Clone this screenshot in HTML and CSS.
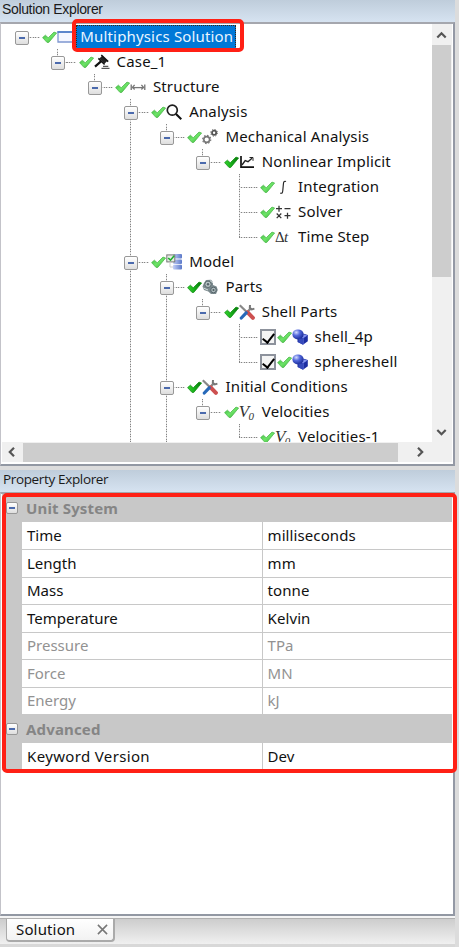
FILE: index.html
```html
<!DOCTYPE html>
<html lang="en">
<head>
<meta charset="utf-8">
<title>Solution Explorer</title>
<link rel="stylesheet" href="styles.css">
</head>
<body>
<svg class="defs" width="0" height="0" aria-hidden="true">
  <defs>
    <linearGradient id="lg" x1="0" y1="0" x2="1" y2="1"><stop offset="0" stop-color="#35b53a"/><stop offset=".5" stop-color="#6ee468"/><stop offset="1" stop-color="#35b335"/></linearGradient>
    <linearGradient id="dg" x1="0" y1="0" x2="1" y2="0"><stop offset="0" stop-color="#35d32f"/><stop offset=".5" stop-color="#16ad18"/><stop offset="1" stop-color="#08720c"/></linearGradient>
    <linearGradient id="bg" x1="0" y1="0" x2="1" y2="0"><stop offset="0" stop-color="#c3cff8"/><stop offset="1" stop-color="#5a78c8"/></linearGradient>
    <radialGradient id="ball" cx=".35" cy=".3" r=".8"><stop offset="0" stop-color="#d5dcff"/><stop offset=".4" stop-color="#5369dc"/><stop offset="1" stop-color="#10208c"/></radialGradient>
  </defs>
  <symbol id="ok" viewBox="0 0 15 14"><path d="M.6 7.6 3.4 5.2 6.2 7.8 12 2.1 14.6 3 6.8 12.4 5 12.4Z" fill="url(#lg)" stroke="#50b94f" stroke-width=".8"/></symbol>
  <symbol id="okd" viewBox="0 0 15 14"><path d="M.6 7.6 3.4 5.2 6.2 7.8 12 2.1 14.6 3 6.8 12.4 5 12.4Z" fill="url(#dg)" stroke="#169019" stroke-width=".8"/></symbol>
  <symbol id="win" viewBox="0 0 16 16"><path d="M1 3H17V13H1Z" fill="#f5f6ff" stroke="#7d96d0" stroke-width="1.3"/><path d="M.4 3H17" stroke="#4d7ac7" stroke-width="1.6"/></symbol>
  <symbol id="gavel" viewBox="0 0 16 16"><path d="M1 12.6 7 7.4" stroke="#111" stroke-width="2.2"/><path d="M5.4 4.5 8.2 1.8 13.2 7 10.5 9.7Z" fill="#222"/><path d="M7.3 1 14.2 7.6M4.4 4.4 10.6 10.5" stroke="#111" stroke-width="1.5"/><path d="M9 12.3H14.3M7.5 14.3H15.5" stroke="#555" stroke-width="1.3"/></symbol>
  <symbol id="beam" viewBox="0 0 16 16"><path d="M1.2 5.4V11M14.8 5.4V11" stroke="#666" stroke-width="1.2"/><path d="M2 8.6H14" fill="none" stroke="#777" stroke-width="1.3"/><path d="M4.6 5.8 2.6 8.3 4.6 10.5M11.4 5.8 13.4 8.3 11.4 10.5" fill="none" stroke="#777" stroke-width="1.3"/></symbol>
  <symbol id="mag" viewBox="0 0 16 16"><circle cx="6.3" cy="6.2" r="5" fill="none" stroke="#1e1e1e" stroke-width="1.7"/><path d="M10 10 15.3 15.2" stroke="#111" stroke-width="2.1"/></symbol>
  <symbol id="gears" viewBox="0 0 16 16"><g fill="none" stroke="#777"><circle cx="4.7" cy="10.5" r="2.9" stroke-width="1.6"/><circle cx="4.7" cy="10.5" r="4.1" stroke-width="1.1" stroke-dasharray="1.6 1.6"/><circle cx="12.1" cy="3.8" r="2.1" stroke="#555" stroke-width="1.8"/><circle cx="12.1" cy="3.8" r="3.4" stroke="#666" stroke-width="1" stroke-dasharray="1.3 1.37"/></g></symbol>
  <symbol id="chart" viewBox="0 0 16 16"><path d="M2 2V13.2H15" fill="none" stroke="#111" stroke-width="1.7"/><path d="M3 11 6.2 6.7 9 7.7 13 4.2" fill="none" stroke="#222" stroke-width="1.4"/><path d="M10.5 3.5H14V6.8" fill="none" stroke="#222" stroke-width="1"/></symbol>
  <symbol id="integral" viewBox="0 0 16 16"><path d="M11 2.6C9.2 1.6 8.6 3 8.4 5L7.8 11.5C7.6 14 6.9 14.8 5.2 14" fill="none" stroke="#222" stroke-width="1.15"/></symbol>
  <symbol id="ops" viewBox="0 0 16 16"><path d="M1 4.7H7M4 1.7V7.7M9.5 4.7H15.5M1.7 9.5 6.3 14.1M6.3 9.5 1.7 14.1M9.5 11.7H15.5M12.5 8.7V14.7" stroke="#333" stroke-width="1.25"/></symbol>
  <symbol id="model" viewBox="0 0 16 16"><g fill="url(#bg)"><rect x="7" y="0" width="9" height="4.6" rx="1"/><rect x="7" y="5.4" width="9" height="4.6" rx="1"/><rect x="7" y="10.8" width="9" height="4.8" rx="1"/></g><rect x=".8" y=".9" width="8" height="7" fill="#e6ede4" stroke="#777"/><path d="M2.2 4 4.5 6.2 8.2 1.8" fill="none" stroke="#20ad30" stroke-width="1.6"/><path d="M4 8V13H7" fill="none" stroke="#ccc"/></symbol>
  <symbol id="parts" viewBox="0 0 16 16"><path d="M2 4 4 1 9 .8 11 3.2V6L14.6 7.6 15.8 11 14 15H9L6.3 12.5 2 11 .5 7.5Z" fill="#7b8a8e"/><circle cx="6" cy="5.3" r="3.2" fill="#b7c3c4" stroke="#5b696d"/><circle cx="6" cy="5.3" r="1.2" fill="#56636a"/><circle cx="11.5" cy="11" r="2.8" fill="#aab8bb" stroke="#56646a"/><circle cx="11.5" cy="11" r="1" fill="#4f5c60"/><path d="M1.5 9 6 11M8 1.5 11 4" stroke="#d3dcdc"/></symbol>
  <symbol id="tools" viewBox="0 0 16 16"><path d="M7 9.5 12 4" stroke="#888" stroke-width="2.4"/><path d="M11 1 10.8 3.8 12.7 5.4 15.4 4.6" fill="none" stroke="#777" stroke-width="2"/><path d="M.8 1.2 8 8.3" stroke="#888" stroke-width="2.2"/><path d="M8.6 8.3 13.9 13.8" stroke="#cd5050" stroke-width="4" stroke-linecap="round"/><path d="M7.2 8.8 2.3 14" stroke="#2769b9" stroke-width="3.2" stroke-linecap="round"/></symbol>
  <symbol id="solid" viewBox="0 0 16 16"><path d="M5.5 7 11 4.5 15.8 6V12.2L11 15.8 5.5 13Z" fill="#1b2da2"/><path d="M6 7.4 11 9.2 15.5 6.6 10.6 5Z" fill="#8392ef"/><path d="M11 9.2V15.4" stroke="#6b7be0"/><ellipse cx="6" cy="5.4" rx="5.6" ry="5" fill="url(#ball)"/><path d="M6.6 9.8 11 9.2V15.4L6.4 13.3Z" fill="#3549bb"/></symbol>
  <symbol id="cross" viewBox="0 0 12 12"><path d="M1 1 11 11M11 1 1 11" stroke="#777" stroke-width="1.7"/></symbol>
</svg>

<main class="app">
  <section class="panel">
    <h2 class="title">Solution Explorer</h2>
    <div class="frame">
      <div class="view">
        <div class="tree">
          <div class="row"><i class="cell node"></i><svg class="ok"><use href="#ok"/></svg><svg class="ico"><use href="#win"/></svg><span class="label selected">Multiphysics Solution</span></div>
          <div class="row"><i class="cell"></i><i class="cell node up"></i><svg class="ok"><use href="#ok"/></svg><svg class="ico"><use href="#gavel"/></svg><span class="label">Case_1</span></div>
          <div class="row"><i class="cell"></i><i class="cell"></i><i class="cell node up"></i><svg class="ok"><use href="#ok"/></svg><svg class="ico"><use href="#beam"/></svg><span class="label">Structure</span></div>
          <div class="row"><i class="cell"></i><i class="cell"></i><i class="cell"></i><i class="cell node line"></i><svg class="ok"><use href="#ok"/></svg><svg class="ico"><use href="#mag"/></svg><span class="label">Analysis</span></div>
          <div class="row"><i class="cell"></i><i class="cell"></i><i class="cell"></i><i class="cell line"></i><i class="cell node up"></i><svg class="ok"><use href="#ok"/></svg><svg class="ico"><use href="#gears"/></svg><span class="label">Mechanical Analysis</span></div>
          <div class="row"><i class="cell"></i><i class="cell"></i><i class="cell"></i><i class="cell line"></i><i class="cell"></i><i class="cell node up"></i><svg class="ok"><use href="#okd"/></svg><svg class="ico"><use href="#chart"/></svg><span class="label">Nonlinear Implicit</span></div>
          <div class="row"><i class="cell"></i><i class="cell"></i><i class="cell"></i><i class="cell line"></i><i class="cell"></i><i class="cell"></i><i class="cell leaf line"></i><svg class="ok"><use href="#ok"/></svg><svg class="ico"><use href="#integral"/></svg><span class="label">Integration</span></div>
          <div class="row"><i class="cell"></i><i class="cell"></i><i class="cell"></i><i class="cell line"></i><i class="cell"></i><i class="cell"></i><i class="cell leaf line"></i><svg class="ok"><use href="#ok"/></svg><svg class="ico"><use href="#ops"/></svg><span class="label">Solver</span></div>
          <div class="row"><i class="cell"></i><i class="cell"></i><i class="cell"></i><i class="cell line"></i><i class="cell"></i><i class="cell"></i><i class="cell leaf up"></i><svg class="ok"><use href="#ok"/></svg><span class="ico math delta">Δ<em>t</em></span><span class="label">Time Step</span></div>
          <div class="row"><i class="cell"></i><i class="cell"></i><i class="cell"></i><i class="cell node line"></i><svg class="ok"><use href="#ok"/></svg><svg class="ico"><use href="#model"/></svg><span class="label">Model</span></div>
          <div class="row"><i class="cell"></i><i class="cell"></i><i class="cell"></i><i class="cell line"></i><i class="cell node line"></i><svg class="ok"><use href="#okd"/></svg><svg class="ico"><use href="#parts"/></svg><span class="label">Parts</span></div>
          <div class="row"><i class="cell"></i><i class="cell"></i><i class="cell"></i><i class="cell line"></i><i class="cell line"></i><i class="cell node up"></i><svg class="ok"><use href="#okd"/></svg><svg class="ico"><use href="#tools"/></svg><span class="label">Shell Parts</span></div>
          <div class="row"><i class="cell"></i><i class="cell"></i><i class="cell"></i><i class="cell line"></i><i class="cell line"></i><i class="cell"></i><i class="cell leaf line"></i><span class="check"></span><svg class="ok"><use href="#ok"/></svg><svg class="ico"><use href="#solid"/></svg><span class="label">shell_4p</span></div>
          <div class="row"><i class="cell"></i><i class="cell"></i><i class="cell"></i><i class="cell line"></i><i class="cell line"></i><i class="cell"></i><i class="cell leaf up"></i><span class="check"></span><svg class="ok"><use href="#ok"/></svg><svg class="ico"><use href="#solid"/></svg><span class="label">sphereshell</span></div>
          <div class="row"><i class="cell"></i><i class="cell"></i><i class="cell"></i><i class="cell line"></i><i class="cell node line"></i><svg class="ok"><use href="#okd"/></svg><svg class="ico"><use href="#tools"/></svg><span class="label">Initial Conditions</span></div>
          <div class="row"><i class="cell"></i><i class="cell"></i><i class="cell"></i><i class="cell line"></i><i class="cell line"></i><i class="cell node up"></i><svg class="ok"><use href="#ok"/></svg><span class="ico math"><em>V<sub>0</sub></em></span><span class="label">Velocities</span></div>
          <div class="row"><i class="cell"></i><i class="cell"></i><i class="cell"></i><i class="cell line"></i><i class="cell line"></i><i class="cell"></i><i class="cell leaf up"></i><svg class="ok"><use href="#ok"/></svg><span class="ico math"><em>V<sub>0</sub></em></span><span class="label">Velocities-1</span></div>
        </div>
        <div class="vbar">
          <svg class="arrow" viewBox="0 0 19 20"><path d="M5.3 13 9.5 8.8 13.7 13"/></svg>
          <div class="vthumb"></div>
          <svg class="arrow" viewBox="0 0 19 20"><path d="M5.3 7.5 9.5 11.7 13.7 7.5"/></svg>
        </div>
      </div>
      <div class="hbar">
        <svg class="arrow" viewBox="0 0 21 19"><path d="M12 4.8 7.8 9 12 13.2"/></svg>
        <div class="hthumb"></div>
        <svg class="arrow harrow" viewBox="0 0 21 19"><path d="M9 4.8 13.2 9 9 13.2"/></svg>
      </div>
    </div>
    <div class="redbox redbox-node"></div>
  </section>

  <section class="panel props">
    <h2 class="title">Property Explorer</h2>
    <div class="frame frame-props">
      <div class="grid">
        <div class="cat"><i class="box"></i>Unit System</div>
        <div class="prop"><span>Time</span><span>milliseconds</span></div>
        <div class="prop"><span>Length</span><span>mm</span></div>
        <div class="prop"><span>Mass</span><span>tonne</span></div>
        <div class="prop"><span>Temperature</span><span>Kelvin</span></div>
        <div class="prop off"><span>Pressure</span><span>TPa</span></div>
        <div class="prop off"><span>Force</span><span>MN</span></div>
        <div class="prop off"><span>Energy</span><span>kJ</span></div>
        <div class="cat"><i class="box"></i>Advanced</div>
        <div class="prop"><span class="wide">Keyword Version</span><span>Dev</span></div>
      </div>
    </div>
    <div class="redbox redbox-grid"></div>
  </section>

  <footer class="tabs"><div class="tab">Solution<svg class="close"><use href="#cross"/></svg></div></footer>
</main>
</body>
</html>
```
FILE: styles.css
```css
* { box-sizing: border-box; }
body { margin: 0; background: #dcdcdc; font-family: "Noto Sans", "Open Sans", sans-serif; font-size: 15px; color: #111; }
.defs { position: absolute; }
.app { width: 459px; height: 947px; display: flex; flex-direction: column; overflow: hidden; }
.panel { position: relative; height: 466px; width: 455px; flex: none; }
.props { height: 446px; margin-top: 4px; }
.title { margin: 0; height: 22px; padding-left: 2px; background: linear-gradient(#bfcddb, #d6e3f1); font: 14px/18px "Liberation Sans", Arial, sans-serif; letter-spacing: -.35px; color: #1a1a1a; }
.props .title { padding-left: 3px; line-height: 19px; font-family: "Open Sans", sans-serif; font-size: 13.5px; letter-spacing: -.35px; }
.frame { height: 444px; border: 1px solid #c3c3c9; border-top: 2px solid #a5a7ae; border-right: 2px solid #9499a5; border-bottom: 2px solid #9298a3; background: #fff; padding: 0 1px; overflow: hidden; }
.view { display: flex; height: 419px; }
.tree { flex: 1; overflow: hidden; border-bottom: 1px solid #f0f0f0; }
.row { display: flex; align-items: center; height: 25px; padding-left: 2px; white-space: nowrap; }
.cell { position: relative; flex: none; width: 36.3px; height: 25px; }
.cell.line::before, .cell.up::before { content: ""; position: absolute; left: 17px; top: 0; width: 1px; height: 100%; background: repeating-linear-gradient(#858585 0 1px, #ddd 1px 2.5px); }
.cell.up::before { height: 13px; }
.node::after, .box { content: ""; width: 12px; height: 12px; border: 1px solid #989898; border-radius: 2px; background: linear-gradient(#4b6aad, #4b6aad) center / 6px 2px no-repeat, linear-gradient(#fff, #dedede); }
.node::after { position: absolute; left: 11px; top: 7px; }
.node { background: repeating-linear-gradient(90deg, #858585 0 1px, #ddd 1px 2.5px) 24px 13px / 12px 1px no-repeat; }
.leaf { background: repeating-linear-gradient(90deg, #858585 0 1px, #ddd 1px 2.5px) 17px 13px / 19px 1px no-repeat; }
.ok { flex: none; width: 15px; height: 14px; margin-left: 2px; }
.ico { flex: none; width: 16px; height: 16px; }
.math { font: 17px/16px "Liberation Serif", serif; color: #333; letter-spacing: -.7px; }
.math sub { font-size: 11px; line-height: 0; vertical-align: -3px; }
.delta { font-size: 15px; }
.label { height: 25px; line-height: 24px; margin-left: 7px; letter-spacing: .16px; }
.selected { position: relative; left: -2px; height: 24px; line-height: 21px; padding: 0 2px 0 3px; margin-left: 5px; background: #0078d7; color: #eaf5ff; border: 1px dotted #3b2511; }
.check { flex: none; width: 16px; height: 16px; margin-left: 1.5px; border: 2px solid #8d929c; background: #f4f4f4; position: relative; }
.check::after { content: ""; position: absolute; left: 3.5px; top: 0; width: 5px; height: 10px; border: solid #000; border-width: 0 2.5px 2.5px 0; transform: rotate(38deg); }
.check + .ok { margin-left: 1px; }
.vbar { width: 20px; background: #f0f0f0; display: flex; flex-direction: column; }
.vbar .arrow { width: 19px; height: 21px; }
.arrow { flex: none; display: block; fill: none; stroke: #555; stroke-width: 2.2; }
.vthumb { width: 19px; height: 232px; background: #cdcdcd; margin-bottom: 145px; }
.hbar { height: 19px; display: flex; background: #f0f0f0; }
.hbar .arrow { width: 21px; height: 19px; }
.hthumb { width: 375px; background: #cdcdcd; }
.hbar .harrow { margin-left: 11px; }
.redbox { position: absolute; border: 4px solid #ff2015; border-radius: 5px; }
.redbox-node { left: 72px; top: 19px; width: 172px; height: 33px; }
.redbox-grid { left: 2px; top: 23px; width: 455px; height: 280px; }
.frame-props { height: 424px; }
.cat { height: 28px; background: #c8c8c8; color: #858585; font-weight: 700; font-size: 15px; letter-spacing: .15px; line-height: 26px; display: flex; align-items: center; }
.cat .box { margin: 0 8px 0 4px; }
.cat + .prop { border-top: 0; }
.prop { display: grid; grid-template-columns: 239.5px 1fr; height: 27.5px; border-left: 20px solid #c8c8c8; line-height: 27px; }
.prop span { padding-left: 5px; border-bottom: 1px solid #c8c8c8; }
.prop span + span { border-left: 1px solid #c8c8c8; letter-spacing: .1px; }
.prop .wide { letter-spacing: .35px; }
.prop.off { color: #929292; }
.tabs { flex: none; width: 455px; height: 29px; margin-top: 2px; border-top: 1.5px solid #afafaf; background: linear-gradient(#cdcdcd, #f0f0f0); padding-left: 6px; border-bottom: 3px solid #d8d8d8; box-shadow: 0 -2px #f4f4f4; }
.tab { width: 109px; height: 23px; padding: 0 5px 0 9px; border: 1px solid #aaa; border-width: 0 2px 2px 1px; border-radius: 0 0 4px 4px; background: linear-gradient(#fff, #f2f2f2); display: flex; align-items: center; justify-content: space-between; line-height: 19px; letter-spacing: .15px; }
.close { width: 11px; height: 11px; }
```
